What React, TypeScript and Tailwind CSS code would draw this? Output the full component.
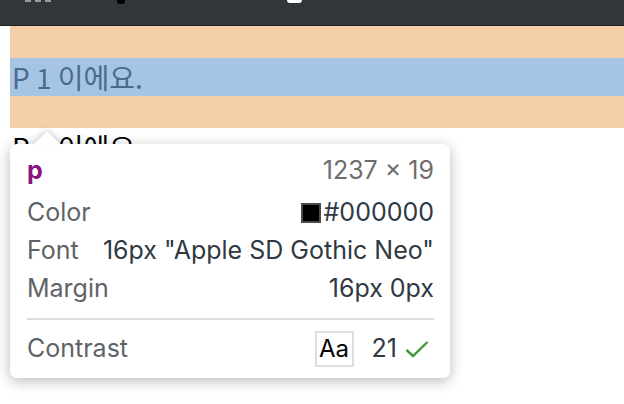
import React from "react";

export default function App() {
  const kr = { fontFamily: '"Noto Sans CJK KR", "Liberation Sans", sans-serif' };
  const ui = { fontFamily: 'Inter, "Liberation Sans", sans-serif' };
  return (
    <div className="w-[624px] h-[404px] bg-white relative overflow-hidden">
      {/* top dark bar */}
      <div className="h-[26px] bg-[#323639] border-b border-[#1e2022] flex items-start">
        <div className="ml-[25px] flex gap-[4px]">
          <div className="w-[6px] h-[2px] bg-[#9a9da0]" />
          <div className="w-[6px] h-[2px] bg-[#9a9da0]" />
          <div className="w-[6px] h-[2px] bg-[#9a9da0]" />
        </div>
        <div className="ml-[66px] w-[8px] h-[4px] bg-black rounded-b-[3px]" />
        <div className="ml-[162px] w-[15px] h-[3px] bg-white rounded-b-full" />
      </div>

      {/* page content */}
      <div className="pl-[10px]" style={kr}>
        <div className="bg-[#f4cea6] py-[32px]">
          <div className="h-[38px] bg-[#a6c5e5] text-[#4b6b8d] text-[28px] leading-[38px] pl-[2px]">
            P 1 이에요.
          </div>
        </div>
        <div className="text-black text-[28px] leading-[38px] pl-[2px]">P 1 이에요.</div>
      </div>

      {/* tooltip */}
      <div
        className="absolute left-[10px] top-[144px] w-[440px] h-[234px] bg-white rounded-[7px] shadow-[0_3px_14px_rgba(0,0,0,0.28)] pt-[8px] pl-[17px] pr-[16px]"
        style={ui}
      >
        <svg
          className="absolute left-[21px] top-[-14px] drop-shadow-[0_-1px_3px_rgba(0,0,0,0.22)]"
          width="32"
          height="16"
          viewBox="0 0 32 16"
        >
          <path d="M2 15 L16 1 L30 15 Z" fill="white" />
        </svg>
        <div className="absolute left-[19px] top-0 w-[36px] h-[4px] bg-white" />
        <div className="flex items-center justify-between h-[38px] text-[25px]">
          <span className="font-bold text-[#881280]">p</span>
          <span className="text-[#6e6e6e]">1237 × 19</span>
        </div>
        <div className="flex items-center justify-between h-[38px] mt-[4px] text-[25px]">
          <span className="text-[#5f6368]">Color</span>
          <span className="flex items-center text-[#303942]">
            <span className="w-[20px] h-[20px] bg-black border-2 border-[#4a4a4a] mr-[3px]" />
            #000000
          </span>
        </div>
        <div className="flex items-center justify-between h-[38px] text-[25px]">
          <span className="text-[#5f6368]">Font</span>
          <span className="text-[#303942]">16px "Apple SD Gothic Neo"</span>
        </div>
        <div className="flex items-center justify-between h-[38px] text-[25px]">
          <span className="text-[#5f6368]">Margin</span>
          <span className="text-[#303942]">16px 0px</span>
        </div>
        <div className="h-[2px] bg-[#dcdcdc] mt-[10px]" />
        <div className="flex items-center justify-between h-[38px] mt-[10px] text-[25px]">
          <span className="text-[#5f6368]">Contrast</span>
          <span className="flex items-center text-[#303942]">
            <span className="w-[39px] h-[36px] border-2 border-[#dedede] flex items-center justify-center text-black text-[24px] mr-[18px]">
              Aa
            </span>
            21
            <svg className="ml-[8px]" width="29" height="20" viewBox="0 0 29 20">
              <path d="M1.5 11 L8 17 L22.5 3" fill="none" stroke="#3d9a37" strokeWidth="2.4" />
            </svg>
          </span>
        </div>
      </div>
    </div>
  );
}
